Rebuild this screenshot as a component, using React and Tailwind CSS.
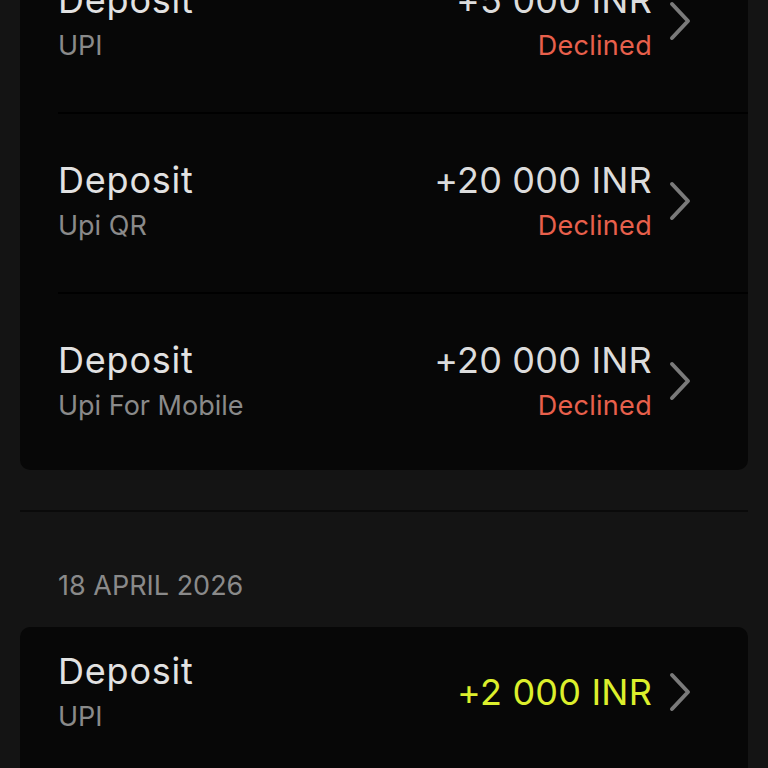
import React from "react";

function Chevron() {
  return (
    <svg width="24" height="40" viewBox="0 0 24 40" className="ml-[16px] shrink-0" fill="none">
      <polyline points="4,3 20,20 4,37" stroke="#7a7a7a" strokeWidth="4" strokeLinecap="round" strokeLinejoin="round" />
    </svg>
  );
}

function Row({ title, sub, amount, status, first, last, yellow }) {
  return (
    <div
      className={
        "flex items-center justify-between pl-[38px] pr-[56px] " +
        (first ? "pt-[24px] " : "pt-[46px] ") +
        (last ? "pb-[48px]" : "pb-[50px]")
      }
    >
      <div className="flex flex-col">
        <div className="text-[36px] leading-[40px] text-[#e2e2e2] tracking-[0.8px]">{title}</div>
        <div className="mt-[10px] text-[27px] leading-[32px] text-[#8a8a8a]">{sub}</div>
      </div>
      <div className="flex items-center">
        <div className="flex flex-col items-end">
          <div
            className={
              "text-[36px] leading-[40px] tracking-[0.2px] " +
              (yellow ? "text-[#dcef2c]" : "text-[#dcdcdc]")
            }
          >
            {amount}
          </div>
          {status && (
            <div className="mt-[10px] text-[27px] leading-[32px] text-[#e8604c] tracking-[0.3px]">{status}</div>
          )}
        </div>
        <Chevron />
      </div>
    </div>
  );
}

function Divider() {
  return <div className="ml-[38px] h-[2px] bg-[#000000]" />;
}

export default function App() {
  return (
    <div
      className="h-[768px] overflow-hidden bg-[#141414] px-[20px]"
      style={{ fontFamily: "Inter, 'Open Sans', sans-serif" }}
    >
      <div className="-mt-[68px] rounded-[10px] bg-[#070707]">
        <Divider />
        <Row title="Deposit" sub="UPI" amount="+5 000 INR" status="Declined" />
        <Divider />
        <Row title="Deposit" sub="Upi QR" amount="+20 000 INR" status="Declined" />
        <Divider />
        <Row title="Deposit" sub="Upi For Mobile" amount="+20 000 INR" status="Declined" last />
      </div>
      <div className="mt-[40px] h-[2px] bg-[#0a0a0a]" />
      <div className="mt-[58px] pl-[38px] text-[27px] leading-[32px] text-[#8a8a8a]">
        18 APRIL 2026
      </div>
      <div className="mt-[25px] rounded-[10px] bg-[#070707]">
        <Row title="Deposit" sub="UPI" amount="+2 000 INR" first yellow />
      </div>
    </div>
  );
}
